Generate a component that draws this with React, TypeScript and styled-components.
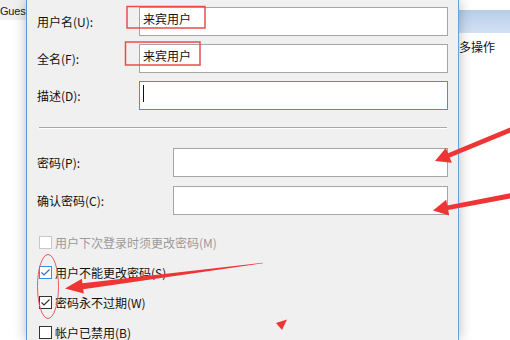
import styled, { createGlobalStyle } from 'styled-components'

const GlobalStyle = createGlobalStyle`
  html, body {
    margin: 0;
    padding: 0;
    background: #fff;
  }
`

const Screen = styled.div`
  position: relative;
  display: flex;
  width: 510px;
  height: 340px;
  overflow: hidden;
  background: #fff;
  font-family: "Noto Sans CJK SC", "Noto Sans", sans-serif;
  font-size: 12px;
  color: #111;
`

const LeftPane = styled.div`
  flex: none;
  width: 26px;
  overflow: hidden;
  background: #fff;
`

const ListHeader = styled.div`
  height: 20px;
  background: #f0f0f0;
  font-family: "Liberation Sans", Arial, sans-serif;
  font-size: 11px;
  letter-spacing: -0.2px;
  line-height: 23px;
  white-space: nowrap;
  color: #222;
`

const Dialog = styled.div`
  position: relative;
  z-index: 1;
  flex: none;
  width: 433px;
  box-sizing: border-box;
  padding: 7px 10px 0 10px;
  background: #f0f0f0;
  border-left: 1px solid #4f9be2;
  border-right: 1px solid #5fa5e4;
  box-shadow: 0 0 12px rgba(0, 0, 0, 0.28);
`

const FieldGrid = styled.div<{ $labelWidth: number; $gap: number }>`
  display: grid;
  grid-template-columns: ${(p) => p.$labelWidth}px 1fr;
  row-gap: ${(p) => p.$gap}px;
  align-items: center;
`

const Label = styled.label`
  line-height: 16px;
  white-space: nowrap;
  padding-top: 1px;
`

const TextBox = styled.div<{ $focused?: boolean }>`
  display: flex;
  align-items: flex-start;
  height: 29px;
  box-sizing: border-box;
  padding: 3px 3px 0;
  background: #fff;
  border: 1px solid ${(p) => (p.$focused ? '#3a93e6' : '#a5a5a5')};
  line-height: 16px;
  white-space: nowrap;
`

const Caret = styled.span`
  width: 1px;
  height: 17px;
  background: #111;
`

const Separator = styled.hr`
  height: 0;
  margin: 17px 1px 0 2px;
  border: none;
  border-top: 1px solid #a8a8a8;
  border-bottom: 1px solid #fff;
`

const PasswordSection = styled.div`
  margin-top: 19px;
`

const CheckList = styled.div`
  display: flex;
  flex-direction: column;
  gap: 12px;
  margin-top: 18px;
`

const CheckRow = styled.div<{ $disabled?: boolean }>`
  display: flex;
  align-items: center;
  gap: 3px;
  height: 18px;
  margin-left: 2px;
  color: ${(p) => (p.$disabled ? '#9a9a9a' : '#111')};
  white-space: nowrap;
`

type BoxTone = 'disabled' | 'focus' | 'normal'

const boxBorder: Record<BoxTone, string> = {
  disabled: '#c8c8c8',
  focus: '#3b8fe0',
  normal: '#333',
}

const Box = styled.span<{ $tone: BoxTone }>`
  display: flex;
  flex: none;
  width: 13px;
  height: 13px;
  box-sizing: border-box;
  background: #fff;
  border: 1px solid ${(p) => boxBorder[p.$tone]};
`

const RightPane = styled.div`
  flex: 1;
  display: flex;
  flex-direction: column;
  background: #fff;
  white-space: nowrap;
`

const TopStrip = styled.div`
  height: 10px;
`

const HeaderBand = styled.div`
  height: 23px;
  background: linear-gradient(#b7cee9, #d2e1f3);
`

const ActionItem = styled.div`
  margin-top: 5px;
  line-height: 17px;
`

const Overlay = styled.svg`
  position: absolute;
  inset: 0;
  z-index: 2;
  pointer-events: none;
`

const RED = '#ee3434'

function arrowPoints(
  tail: [number, number],
  tip: [number, number],
  tailW: number,
  shaftW: number,
  headLen: number,
  headW: number
) {
  const dx = tip[0] - tail[0]
  const dy = tip[1] - tail[1]
  const len = Math.hypot(dx, dy)
  const ux = dx / len
  const uy = dy / len
  const nx = -uy
  const ny = ux
  const bx = tip[0] - ux * headLen
  const by = tip[1] - uy * headLen
  const pts = [
    [tail[0] + (nx * tailW) / 2, tail[1] + (ny * tailW) / 2],
    [bx + (nx * shaftW) / 2, by + (ny * shaftW) / 2],
    [bx + (nx * headW) / 2, by + (ny * headW) / 2],
    tip,
    [bx - (nx * headW) / 2, by - (ny * headW) / 2],
    [bx - (nx * shaftW) / 2, by - (ny * shaftW) / 2],
    [tail[0] - (nx * tailW) / 2, tail[1] - (ny * tailW) / 2],
  ]
  return pts.map((p) => `${p[0].toFixed(1)},${p[1].toFixed(1)}`).join(' ')
}

const Check = ({ tone }: { tone: BoxTone }) => (
  <svg width="11" height="11" viewBox="0 0 11 11">
    <polyline
      points="1.5,5.5 4,8 9.5,2.5"
      fill="none"
      stroke={tone === 'focus' ? '#2f6fb8' : '#333'}
      strokeWidth="1.2"
    />
  </svg>
)

const CheckItem = ({
  label,
  checked,
  tone,
}: {
  label: string
  checked?: boolean
  tone: BoxTone
}) => (
  <CheckRow $disabled={tone === 'disabled'}>
    <Box $tone={tone}>{checked && <Check tone={tone} />}</Box>
    <span>{label}</span>
  </CheckRow>
)

export default function App() {
  return (
    <>
      <GlobalStyle />
      <Screen>
        <LeftPane>
          <ListHeader>Gues</ListHeader>
        </LeftPane>

        <Dialog>
          <FieldGrid $labelWidth={102} $gap={8}>
            <Label>用户名(U):</Label>
            <TextBox>来宾用户</TextBox>
            <Label>全名(F):</Label>
            <TextBox>来宾用户</TextBox>
            <Label>描述(D):</Label>
            <TextBox $focused>
              <Caret />
            </TextBox>
          </FieldGrid>

          <Separator />

          <PasswordSection>
            <FieldGrid $labelWidth={136} $gap={9}>
              <Label>密码(P):</Label>
              <TextBox />
              <Label>确认密码(C):</Label>
              <TextBox />
            </FieldGrid>
          </PasswordSection>

          <CheckList>
            <CheckItem tone="disabled" label="用户下次登录时须更改密码(M)" />
            <CheckItem tone="focus" checked label="用户不能更改密码(S)" />
            <CheckItem tone="normal" checked label="密码永不过期(W)" />
            <CheckItem tone="normal" label="帐户已禁用(B)" />
          </CheckList>
        </Dialog>

        <RightPane>
          <TopStrip />
          <HeaderBand />
          <ActionItem>多操作</ActionItem>
        </RightPane>

        <Overlay width="510" height="340" viewBox="0 0 510 340">
          <rect x="127" y="6.5" width="78" height="21.5" fill="none" stroke="#ea4c4c" strokeWidth="1.5" />
          <rect x="125.5" y="42" width="74.5" height="23" fill="none" stroke="#ea4c4c" strokeWidth="1.5" />
          <polygon points={arrowPoints([520, 126], [435, 161], 5, 4.5, 15, 16)} fill={RED} />
          <polygon points={arrowPoints([520, 194], [433, 210.5], 5, 4.5, 15, 16)} fill={RED} />
          <polygon points={arrowPoints([263, 263], [65, 288.5], 0.6, 6, 18, 15)} fill={RED} />
          <ellipse cx="48" cy="286.5" rx="10.5" ry="32" fill="none" stroke="#e85a5a" strokeWidth="1" />
          <polygon points="276,323 287,319.5 282,330" fill={RED} />
        </Overlay>
      </Screen>
    </>
  )
}
